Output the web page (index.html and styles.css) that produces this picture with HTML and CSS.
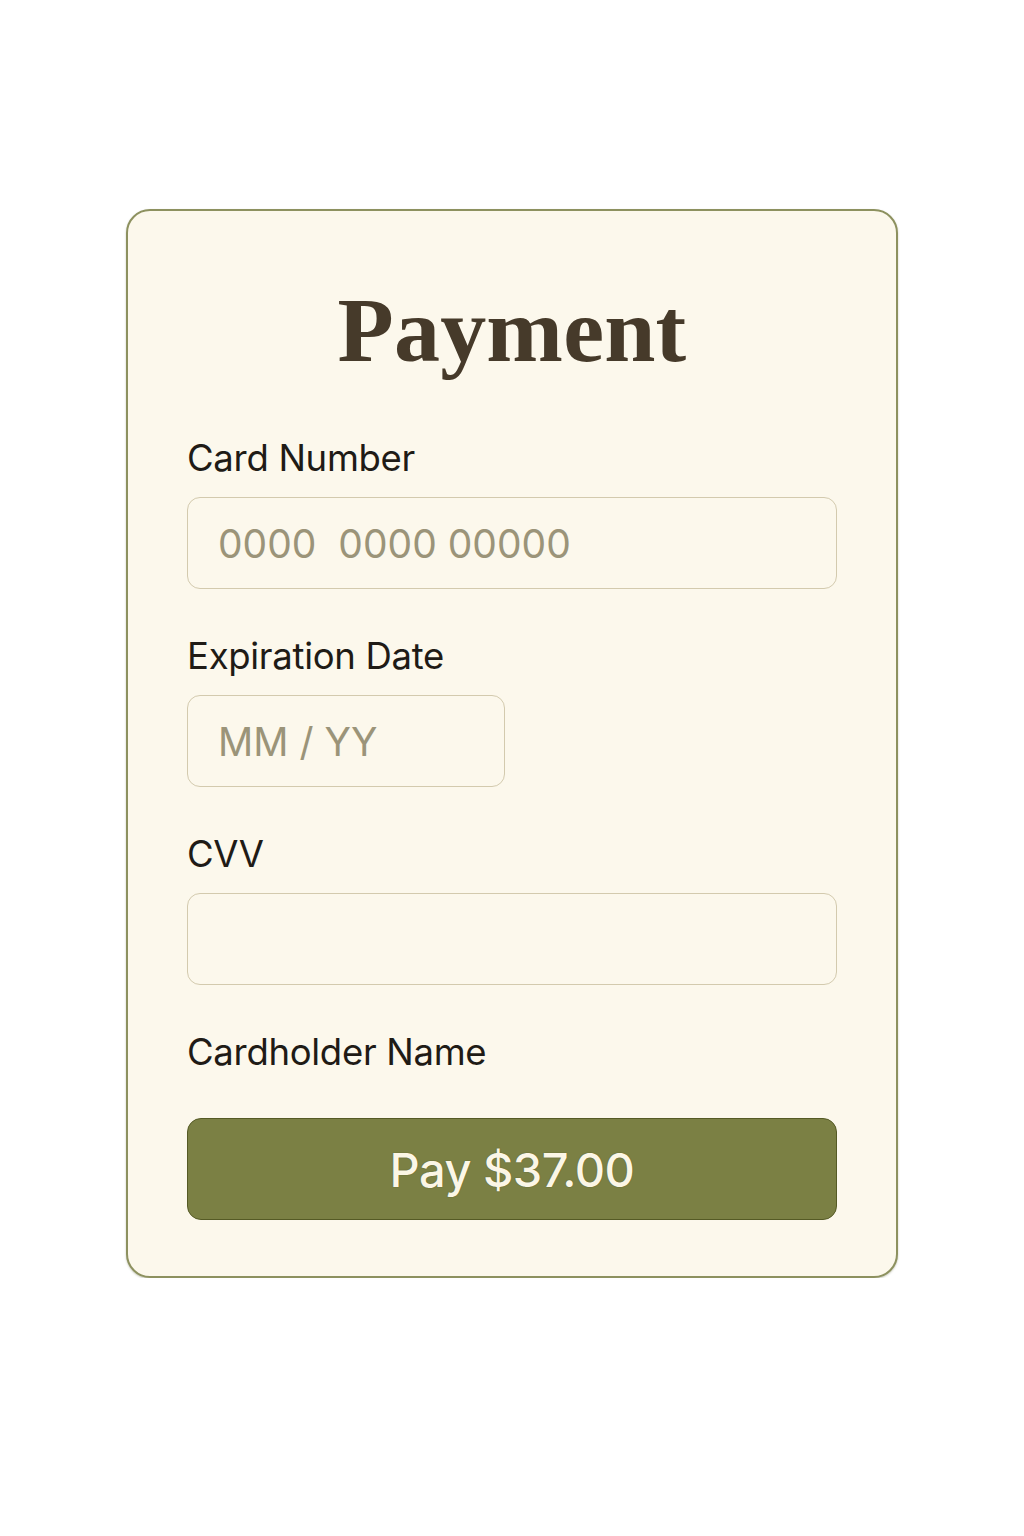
FILE: index.html
```html
<!DOCTYPE html>
<html lang="en">
<head>
<meta charset="utf-8">
<title>Payment</title>
<link rel="stylesheet" href="styles.css">
</head>
<body>
<main class="card">
  <h1 class="title">Payment</h1>
  <form class="form">
    <div class="field">
      <label class="label" for="cc">Card Number</label>
      <input class="input" id="cc" type="text" placeholder="0000  0000 00000">
    </div>
    <div class="field">
      <label class="label" for="exp">Expiration Date</label>
      <input class="input input-short" id="exp" type="text" placeholder="MM / YY">
    </div>
    <div class="field">
      <label class="label" for="cvv">CVV</label>
      <input class="input" id="cvv" type="text">
    </div>
    <div class="field field-last">
      <span class="label">Cardholder Name</span>
    </div>
    <button class="pay" type="button">Pay $37.00</button>
  </form>
</main>
</body>
</html>
```

FILE: styles.css
```css
html, body {
  margin: 0;
  padding: 0;
  background: #ffffff;
}

body {
  font-family: Inter, "Noto Sans", "Liberation Sans", sans-serif;
}

.card {
  box-sizing: border-box;
  width: 772px;
  margin: 209px auto 0;
  padding: 74px 59px 56px;
  background: #fcf8ec;
  border: 2px solid #8d915f;
  border-radius: 24px;
  box-shadow: 0 1px 2px rgba(90, 95, 50, 0.35);
}

.title {
  margin: 0 0 65px;
  text-align: center;
  font-family: "Liberation Serif", "Times New Roman", serif;
  font-weight: 700;
  font-size: 92px;
  line-height: 90px;
  color: #463a2a;
  letter-spacing: 0.2px;
}

.form {
  display: flex;
  flex-direction: column;
  margin: 0;
}

.field {
  display: flex;
  flex-direction: column;
  gap: 17px;
  margin-bottom: 49px;
}

.field-last {
  margin-bottom: 44px;
}

.label {
  font-size: 36.5px;
  line-height: 40px;
  font-weight: 400;
  color: #1f1b16;
  letter-spacing: -0.3px;
  margin-top: -2px;
  margin-bottom: 2px;
}

.input {
  box-sizing: border-box;
  width: 100%;
  height: 92px;
  padding: 0 0 0 30px;
  margin: 0;
  font-family: Inter, "Noto Sans", "Liberation Sans", sans-serif;
  font-size: 39px;
  color: #3a3428;
  background: #fcf8ec;
  border: 1.5px solid #d3caae;
  border-radius: 13px;
  outline: none;
}

.input::placeholder {
  color: #9b9479;
  opacity: 1;
}

.input-short {
  width: 318px;
}

.pay {
  box-sizing: border-box;
  width: 100%;
  height: 102px;
  margin: 0;
  padding: 0;
  background: #7b8044;
  border: 1.5px solid #555a25;
  border-radius: 14px;
  color: #fbf6e6;
  font-family: Inter, "Noto Sans", "Liberation Sans", sans-serif;
  font-size: 47px;
  font-weight: 500;
  letter-spacing: -0.5px;
  text-shadow: 0 0 1px #3f4318;
  cursor: pointer;
}
```
